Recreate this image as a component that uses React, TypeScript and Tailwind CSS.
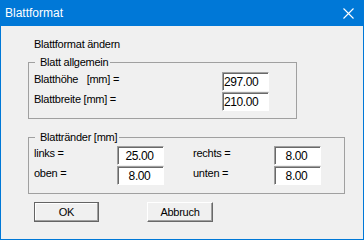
import { ReactNode } from 'react'

// Windows-style "Blattformat" dialog: title bar, two group boxes, two buttons.

const Field = ({ value, center = false }: { value: string; center?: boolean }) => (
  <div
    className={
      center
        ? 'h-[19px] w-[47px] shrink-0 overflow-hidden bg-white border border-t-[#a0a0a0] border-l-[#a0a0a0] border-r-white border-b-white shadow-[inset_1px_1px_0_#696969] text-[12px] leading-[19px] tracking-[-0.4px] text-black text-center pr-[2px]'
        : 'h-[19px] w-[47px] shrink-0 overflow-hidden bg-white border border-t-[#a0a0a0] border-l-[#a0a0a0] border-r-white border-b-white shadow-[inset_1px_1px_0_#696969] text-[12px] leading-[19px] tracking-[-0.4px] text-black pl-[1px]'
    }
  >
    {value}
  </div>
)

const Group = ({ title, className, children }: { title: string; className: string; children: ReactNode }) => (
  <fieldset className={className}>
    <legend className="ml-[6px] pl-[5px] pr-[2px] text-[11px] leading-[13px] tracking-[-0.25px]">{title}</legend>
    {children}
  </fieldset>
)

const Label = ({ text, w }: { text: string; w: string }) => (
  <div className={w + ' shrink-0 mt-[1px] text-[11px] leading-[13px] tracking-[-0.25px] whitespace-pre'}>{text}</div>
)

export default function App() {
  return (
    <div className="w-[364px] h-[240px] flex flex-col font-['Liberation_Sans',Arial,sans-serif] text-black select-none">
      {/* title bar */}
      <div className="h-[26px] shrink-0 bg-[#0078d7] flex items-center justify-between pl-[5px] pr-[10px]">
        <span className="text-white text-[12px] leading-[16px]">Blattformat</span>
        <svg width="11" height="11" viewBox="0 0 11 11" className="mt-[1px]">
          <path d="M0.5 0.5 L10.5 10.5 M10.5 0.5 L0.5 10.5" stroke="#ffffff" strokeWidth="1.1" />
        </svg>
      </div>

      {/* body */}
      <div className="flex-1 bg-[#f0f0f0] border-x border-b border-[#0078d7] pl-[27px]">
        <div className="mt-[12px] pl-[6px] text-[11px] leading-[13px] tracking-[-0.25px]">Blattformat ändern</div>

        <Group title="Blatt allgemein" className="mt-[5px] w-[269px] border border-[#a0a0a0]">
          <div className="flex flex-col gap-[1px] pl-[5px] pt-[3px] pb-[7px]">
            <div className="flex items-start">
              <Label text="Blatthöhe   [mm] =" w="w-[188px]" />
              <Field value="297.00" />
            </div>
            <div className="flex items-start">
              <Label text="Blattbreite [mm] =" w="w-[188px]" />
              <Field value="210.00" />
            </div>
          </div>
        </Group>

        <Group title="Blattränder [mm]" className="mt-[12px] w-[317px] border border-[#a0a0a0]">
          <div className="flex flex-col gap-[1px] pl-[5px] pt-[2px] pb-[8px]">
            <div className="flex items-start">
              <Label text="links =" w="w-[83px]" />
              <Field value="25.00" center />
              <div className="w-[29px] shrink-0" />
              <Label text="rechts =" w="w-[81px]" />
              <Field value="8.00" center />
            </div>
            <div className="flex items-start">
              <Label text="oben =" w="w-[83px]" />
              <Field value="8.00" center />
              <div className="w-[29px] shrink-0" />
              <Label text="unten =" w="w-[81px]" />
              <Field value="8.00" center />
            </div>
          </div>
        </Group>

        <div className="mt-[8px] ml-[6px] flex">
          <button className="w-[65px] h-[20px] bg-[#f0f0f0] border border-[#646464] shadow-[inset_-1px_-1px_0_#a0a0a0,inset_1px_1px_0_#ffffff] text-[11px] leading-[16px] tracking-[-0.25px]">
            OK
          </button>
          <button className="ml-[48px] w-[66px] h-[20px] bg-[#f0f0f0] border border-t-white border-l-white border-r-[#696969] border-b-[#696969] shadow-[inset_-1px_-1px_0_#a0a0a0] text-[11px] leading-[16px] tracking-[-0.25px]">
            Abbruch
          </button>
        </div>
      </div>
    </div>
  )
}
